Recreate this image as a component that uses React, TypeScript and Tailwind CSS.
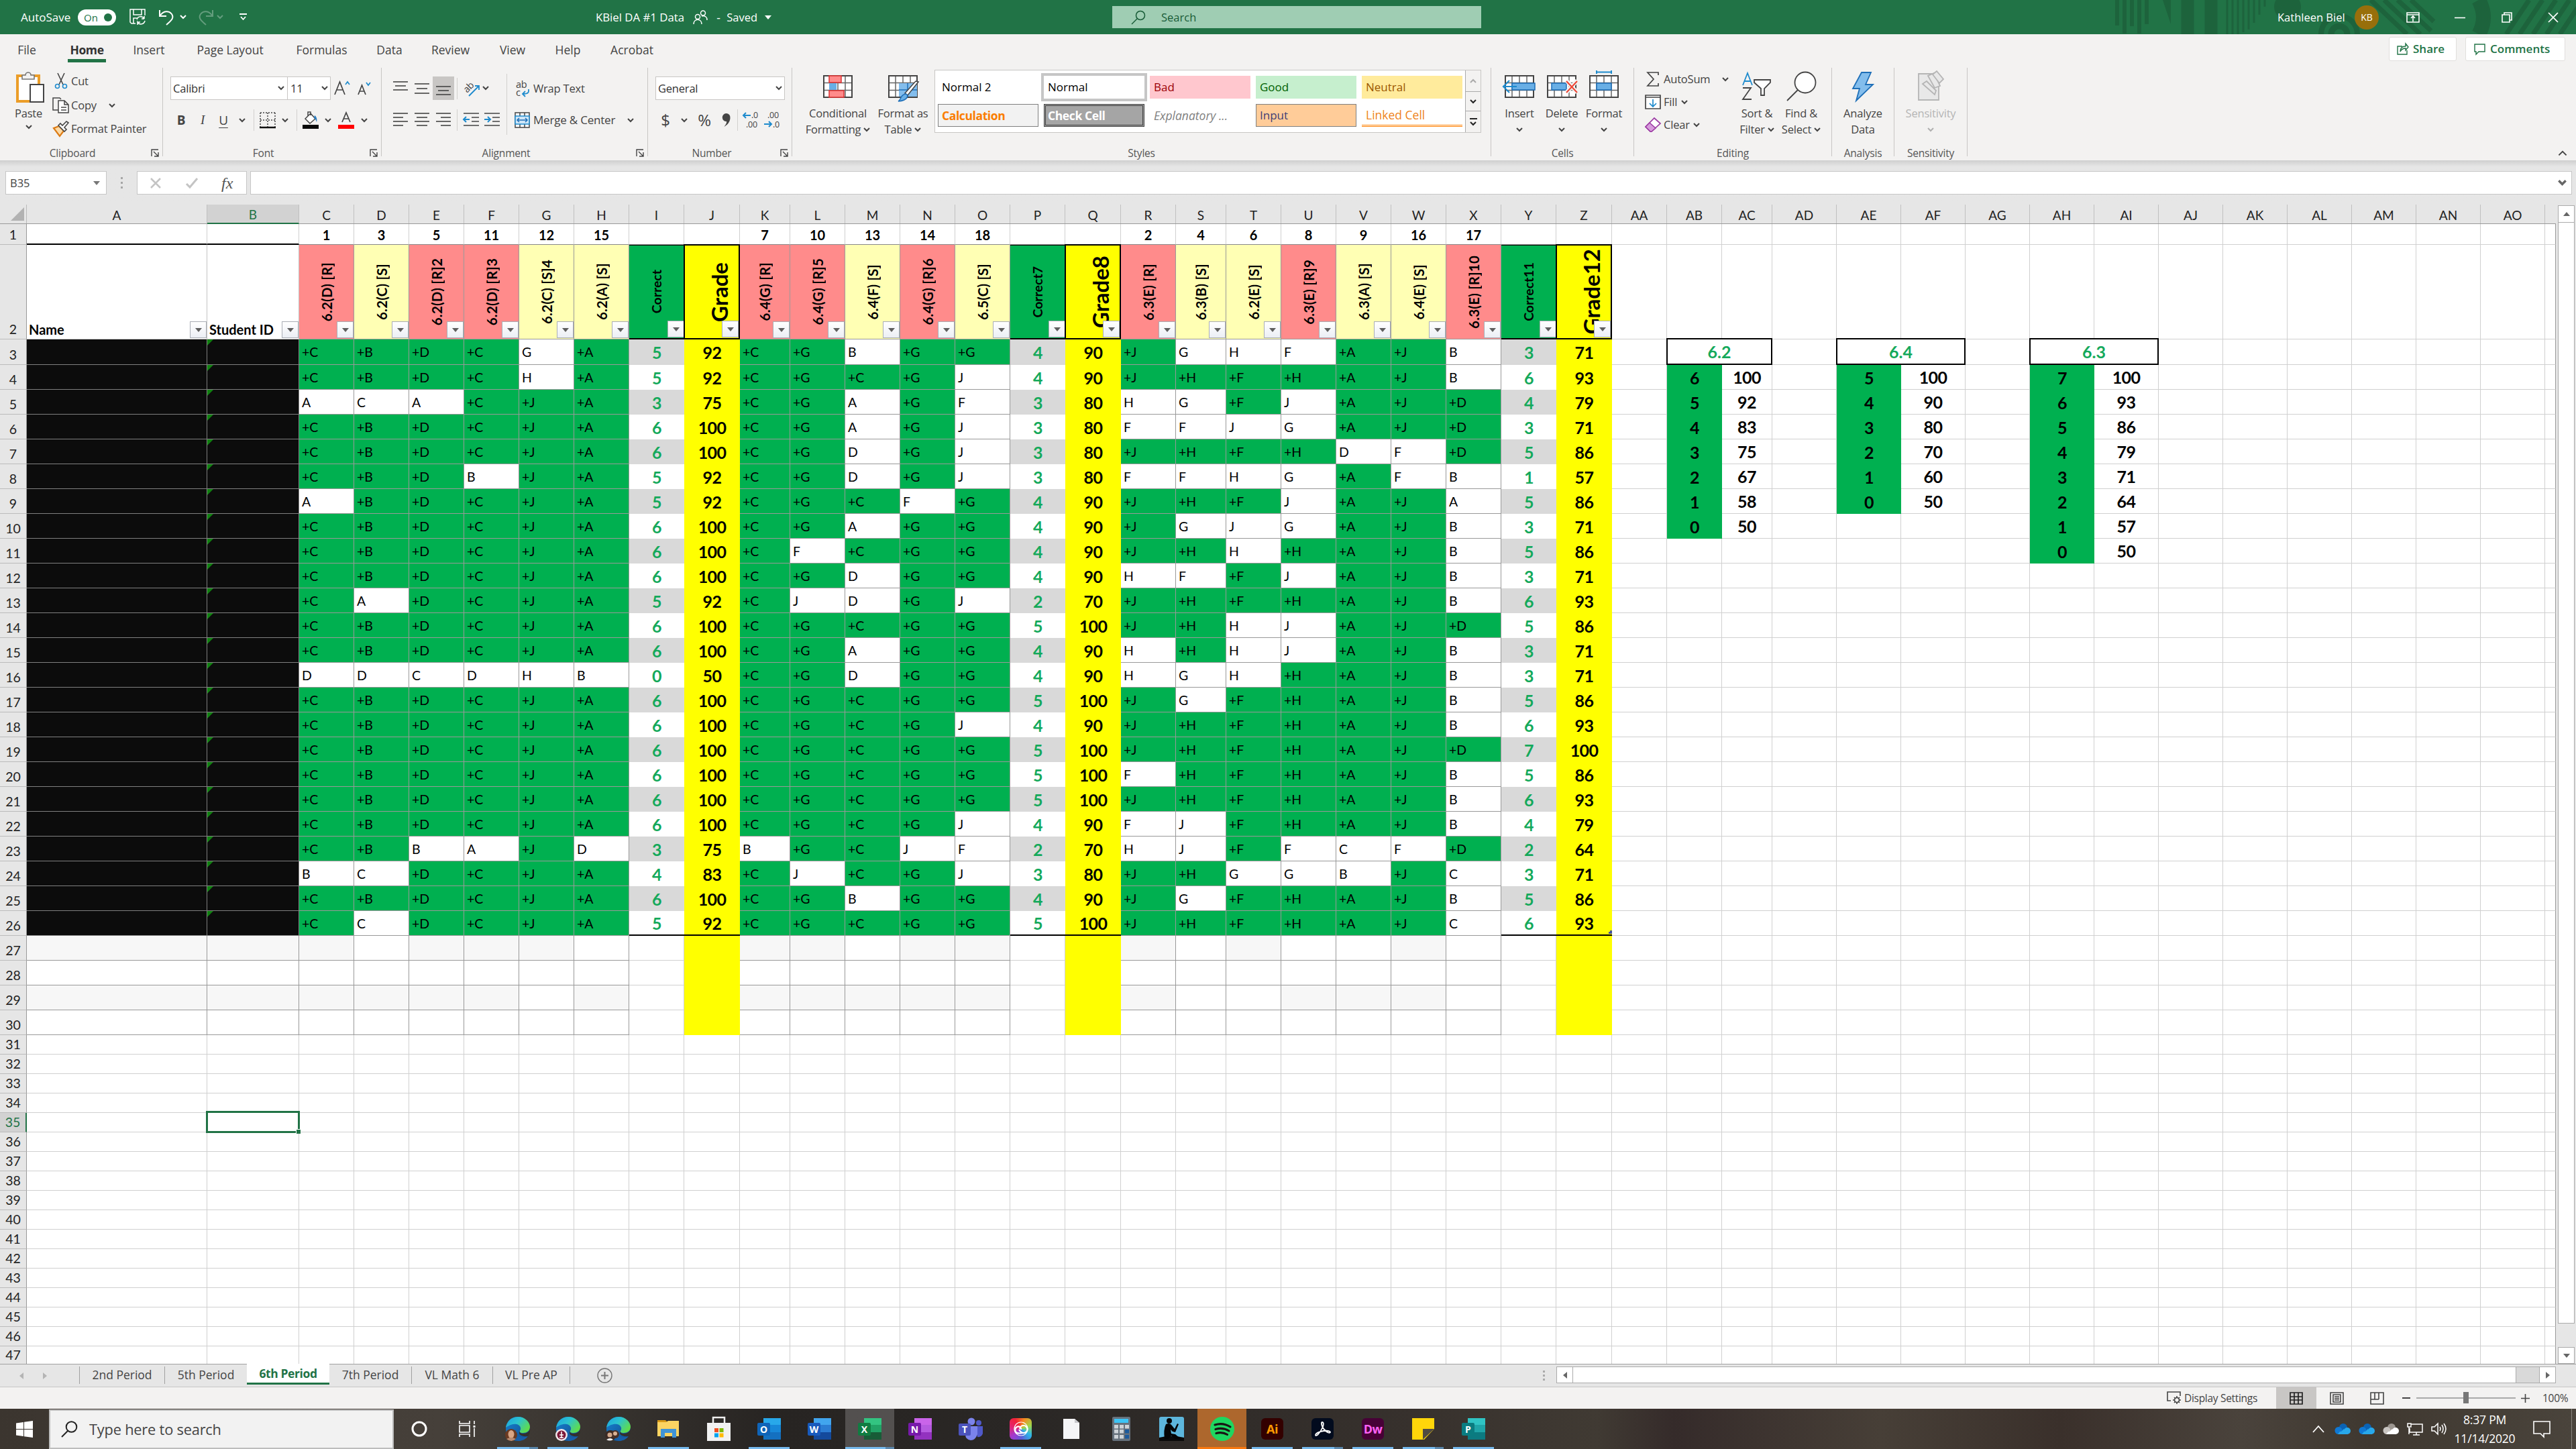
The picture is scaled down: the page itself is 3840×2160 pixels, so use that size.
import React from "react";

type Kids = { children?: React.ReactNode };

/* ---------- small shared glyphs ---------- */

function Chev({ c = "#444", w = 10, sw = 2 }: { c?: string; w?: number; sw?: number }) {
  return (
    <svg width={w} height={w * 0.7} viewBox="0 0 10 7" fill="none" stroke={c} strokeWidth={sw} className="shrink-0">
      <path d="M1 1l4 4 4-4" />
    </svg>
  );
}

function Tri({ c = "#666", dir = "down" }: { c?: string; dir?: "down" | "up" | "left" | "right" }) {
  const d = { down: "M0 2h10l-5 6z", up: "M0 8h10l-5-6z", left: "M8 0v10l-6-5z", right: "M2 0v10l6-5z" }[dir];
  return (
    <svg width="10" height="10" viewBox="0 0 10 10" fill={c} className="shrink-0">
      <path d={d} />
    </svg>
  );
}

function Lines({ rows }: { rows: [number, number, number][] }) {
  return (
    <svg width="22" height="24" viewBox="0 0 22 24" stroke="#444" strokeWidth="1.6">
      {rows.map(([x1, x2, y], i) => (
        <path key={i} d={`M${x1} ${y}H${x2}`} />
      ))}
    </svg>
  );
}

function Launcher() {
  return (
    <svg width="12" height="12" viewBox="0 0 12 12" fill="none" stroke="#444" strokeWidth="1.4">
      <path d="M1 11V1h10M4 4l7 7M11 5v6H5" />
    </svg>
  );
}

/* ---------- title bar ---------- */

function TitleBar() {
  return (
    <div className="relative flex h-[51px] items-center bg-[#217346] text-[17.5px] text-white">
      <svg className="absolute top-0 right-0" width="690" height="51" viewBox="0 0 690 51" stroke="#1d633c" fill="none" style={{ overflow: "hidden" }}>
        <g strokeWidth="6">
          <path d="M6 0V38M17 0V50M28 0V39M39 0V50M50 0V36" />
        </g>
        <path d="M74 0h12V36z" fill="#1d633c" stroke="none" />
        <path d="M111 0V51M146 0V51" strokeWidth="19" />
        <path d="M170 0V51M178 0V51M186 0V51M194 0V48M202 0V44M210 0V34M218 0V22M226 0V10" strokeWidth="3" />
        <circle cx="260" cy="10" r="20" fill="#1d633c" stroke="none" />
        <circle cx="337" cy="51" r="12" strokeWidth="9" />
        <circle cx="337" cy="51" r="27" strokeWidth="8" />
        <path d="M384 0l54 51M404 0l54 51M424 0l50 46M444 0l34 32" strokeWidth="7" />
        <path d="M545 0q14 26 0 51" strokeWidth="22" />
        <path d="M620 0l-34 51M640 0l-34 51M660 0l-34 51M680 0l-34 51M700 0l-34 51" strokeWidth="7" />
      </svg>
      <div className="ml-[31px] w-[85px] whitespace-nowrap text-[17px]">AutoSave</div>
      <div className="flex h-6 w-[57px] items-center justify-between rounded-full bg-white pr-[6px] pl-[9px] text-[15px] text-[#217346]">
        On
        <span className="size-3 rounded-full bg-[#217346]" />
      </div>
      <svg className="ml-[20px]" width="25" height="25" viewBox="0 0 25 25" fill="none" stroke="#fff" strokeWidth="1.5">
        <path d="M9 22H3L1 20V1h22v9M6 1v8h12V1M6 22v-8h5" />
        <path d="M11 16a6 6 0 0 1 11-1v-4m0 4h-4M23 18a6 6 0 0 1-11 2v4m0-4h4" />
      </svg>
      <svg className="ml-[18px]" width="24" height="24" viewBox="0 0 24 24" fill="none" stroke="#fff" strokeWidth="2">
        <path d="M2 1v9h10M2 10C8 1 16 2 20 7c4 6-1 10-8 16" />
      </svg>
      <div className="ml-[8px]"><Chev c="#fff" /></div>
      <svg className="ml-[17px] opacity-30" width="24" height="24" viewBox="0 0 24 24" fill="none" stroke="#fff" strokeWidth="2">
        <path d="M22 1v9H12M22 10C16 1 8 2 4 7c-4 6 1 10 8 16" />
      </svg>
      <div className="ml-[4px] opacity-30"><Chev c="#fff" /></div>
      <svg className="ml-[24px]" width="11" height="11" viewBox="0 0 11 11" fill="none" stroke="#fff" strokeWidth="1.8">
        <path d="M0 1h11M2 5l3.500 4L9 5" />
      </svg>
      <div className="ml-[520px] flex w-[262px] items-center whitespace-nowrap">
        <span className="w-[146px] text-[16.800px]">KBiel DA #1 Data</span>
        <svg width="22" height="22" viewBox="0 0 22 22" fill="none" stroke="#fff" strokeWidth="1.5">
          <circle cx="7" cy="10" r="3.500" /><path d="M1 21c0-9 12-9 12 0" />
          <circle cx="15" cy="4.500" r="3.500" /><path d="M13 9c5-1 8 1 8 6" />
        </svg>
        <span className="ml-[13px] w-[15px]">-</span>
        <span className="w-[57px] text-[16.500px]">Saved</span>
        <Tri c="#fff" />
      </div>
      <div className="ml-[508px] flex h-[33px] w-[550px] items-center bg-[#9fcdb3] text-[#185c37]">
        <svg className="ml-[28px]" width="22" height="22" viewBox="0 0 22 22" fill="none" stroke="#185c37" strokeWidth="1.500">
          <circle cx="14" cy="8" r="6.500" /><path d="M9 13l-8 8" />
        </svg>
        <span className="ml-[23px] text-[16.500px]">Search</span>
      </div>
      <div className="relative ml-auto flex w-[445px] items-center">
        <span className="w-[115px] whitespace-nowrap text-[16.500px]">Kathleen Biel</span>
        <span className="flex size-9 items-center justify-center rounded-full bg-[#986f0b] text-[14px]">KB</span>
        <svg className="ml-[41px]" width="20" height="16" viewBox="0 0 20 16" fill="none" stroke="#fff" strokeWidth="1.600">
          <path d="M1 1h18v14H1zM1 4h18M10 14V7M7 9l3-3 3 3" />
        </svg>
        <svg className="ml-[52px]" width="16" height="16" viewBox="0 0 16 16" stroke="#fff" strokeWidth="1.600"><path d="M0 8.500h16" /></svg>
        <svg className="ml-[54px]" width="16" height="16" viewBox="0 0 16 16" fill="none" stroke="#fff" strokeWidth="1.600">
          <path d="M1 4h11v11H1zM4 4V1h11v11h-3" />
        </svg>
        <svg className="ml-[53px]" width="16" height="16" viewBox="0 0 16 16" stroke="#fff" strokeWidth="1.600"><path d="M1 1l14 14M15 1L1 15" /></svg>
      </div>
    </div>
  );
}

/* ---------- ribbon tabs ---------- */

const TABS: [string, string][] = [
  ["File", "ml-[25px] w-[30px]"],
  ["Home", "ml-[46px] w-[57px]"],
  ["Insert", "ml-[40px] w-[48px]"],
  ["Page Layout", "ml-[44px] w-[106px]"],
  ["Formulas", "ml-[43px] w-[81px]"],
  ["Data", "ml-[40px] w-[41px]"],
  ["Review", "ml-[40px] w-[61px]"],
  ["View", "ml-[41px] w-[42px]"],
  ["Help", "ml-[41px] w-[41px]"],
  ["Acrobat", "ml-[40px] w-[70px]"],
];

function RibbonTabs() {
  return (
    <div className="flex h-[50px] bg-[#f3f2f1] text-[17.500px] text-[#444]">
      {TABS.map(([t, c]) => (
        <div key={t} className={`${c} flex flex-col items-center whitespace-nowrap`}>
          <span className={`flex h-[37px] items-center pt-[8px] ${t === "Home" ? "font-bold tracking-[-0.4px] text-[#333]" : ""}`}>{t}</span>
          {t === "Home" && <span className="h-[5px] w-[57px] bg-[#217346]" />}
        </div>
      ))}
      <div className="mt-[4px] ml-auto flex h-[36px] w-[279px] gap-[13px] text-[17px] font-semibold text-[#217346]">
        <div className="flex w-[101px] items-center rounded-[3px] border border-[#e1dfdd] bg-white pl-[11px]">
          <svg width="18" height="18" viewBox="0 0 18 18" fill="none" stroke="#217346" strokeWidth="1.400">
            <path d="M8 5H1v12h14v-6M5 13c0-6 4-8 8-8V1l4 5-4 5V8c-4 0-6 1-8 5z" />
          </svg>
          <span className="ml-[6px]">Share</span>
        </div>
        <div className="flex w-[149px] items-center rounded-[3px] border border-[#e1dfdd] bg-white pl-[12px]">
          <svg width="17" height="17" viewBox="0 0 17 17" fill="none" stroke="#217346" strokeWidth="1.400">
            <path d="M1 1h15v11H7l-4 4v-4H1z" />
          </svg>
          <span className="ml-[7px]">Comments</span>
        </div>
      </div>
    </div>
  );
}

/* ---------- ribbon groups ---------- */

function Group({ w, label, launcher, lx = "", children }: Kids & { w: string; label: string; launcher?: boolean; lx?: string }) {
  return (
    <>
      <div className={`${w} flex h-[138px] shrink-0 flex-col`}>
        <div className="flex h-[116px]">{children}</div>
        <div className="relative flex h-[22px] items-center justify-center text-[15.500px] tracking-[-0.2px] text-[#555]">
          <span className={lx}>{label}</span>
          {launcher && <span className="absolute right-[5px]"><Launcher /></span>}
        </div>
      </div>
      <div className="h-[132px] w-px shrink-0 bg-[#c8c6c4]" />
    </>
  );
}

const S = ({ w, children }: Kids & { w: string }) => <div className={`${w} flex shrink-0 items-center justify-center`}>{children}</div>;

function Big({ icon, l1, l2, chev, w, c = "text-[#444]" }: { icon: React.ReactNode; l1: string; l2?: string; chev?: boolean; w: string; c?: string }) {
  return (
    <div className={`${w} ${c} flex shrink-0 flex-col items-center text-[16.500px] leading-[24px] tracking-[-0.2px] whitespace-nowrap`}>
      <div className="flex h-[56px] items-center justify-center">{icon}</div>
      <div>{l1}</div>
      <div className="flex h-[24px] items-center gap-[4px]">
        {l2}
        {chev && <Chev c={c === "text-[#444]" ? "#444" : "#b0b0b0"} />}
      </div>
    </div>
  );
}

const AL = {
  top: [[0, 22, 2], [3, 19, 8], [0, 22, 14]],
  mid: [[0, 22, 5], [3, 19, 12], [0, 22, 19]],
  bot: [[0, 22, 9], [3, 19, 15], [0, 22, 21]],
  l: [[0, 22, 2], [0, 15, 8], [0, 22, 14], [0, 15, 20]],
  c: [[0, 22, 2], [3, 19, 8], [0, 22, 14], [3, 19, 20]],
  r: [[0, 22, 2], [7, 22, 8], [0, 22, 14], [7, 22, 20]],
} as Record<string, [number, number, number][]>;

function TableIcon({ children }: Kids) {
  return (
    <svg width="48" height="48" viewBox="0 0 48 48" fill="none">
      <path d="M3 8h42v32H3z" fill="#fff" />
      <path d="M3 18.500h42M3 29.500h42M13 8v32M24 8v32M35 8v32" stroke="#666" strokeWidth="1.500" />
      <path d="M3 8h42v32H3z" stroke="#444" strokeWidth="2" />
      {children}
    </svg>
  );
}

function IndentIcon({ right }: { right?: boolean }) {
  return (
    <svg width="23" height="24" viewBox="0 0 23 24" fill="none" strokeWidth="1.600">
      <path d="M0 2h23M12 8h11M12 14h11M0 20h23" stroke="#444" />
      <path d={right ? "M0 11h9M5 7l4 4-4 4" : "M9 11H0M4 7l-4 4 4 4"} stroke="#1e8bcd" strokeWidth="2" />
    </svg>
  );
}

function DecimalIcon({ dec }: { dec?: boolean }) {
  return (
    <svg width="27" height="28" viewBox="0 0 27 28" fill="none">
      <g fontFamily="Open Sans" fontSize="12.500" fill="#444">
        <text x={dec ? 5 : 12} y="11">{dec ? ".00" : ".0"}</text>
        <text x={dec ? 13 : 4} y="25">{dec ? ".0" : ".00"}</text>
      </g>
      <path d={dec ? "M0 20h11M7 16l4 4-4 4" : "M11 7H0M4 3L0 7l4 4"} stroke="#1e8bcd" strokeWidth="2" />
    </svg>
  );
}

function Ribbon() {
  return (
    <div className="relative flex h-[138px] bg-[#f3f2f1] text-[16.500px] tracking-[-0.2px] text-[#444]">
      <Group w="w-[242px]" label="Clipboard" launcher lx="pr-[26px]">
        <div className="ml-[7px] flex w-[71px] flex-col items-center">
          <svg className="mt-[6px] ml-[4px]" width="44" height="48" viewBox="0 0 44 48" fill="none">
            <path d="M3 6h32v38H3z" fill="#fff" stroke="#eb9d28" strokeWidth="4" />
            <path d="M10 11V5h5a4 4 0 0 1 8 0h5v6z" fill="#f3f2f1" stroke="#777" strokeWidth="1.600" />
            <path d="M22 19h20v26H22z" fill="#fff" stroke="#444" strokeWidth="2" />
          </svg>
          <span className="mt-[2px]">Paste</span>
          <div className="mt-[5px] leading-none"><Chev /></div>
        </div>
        <div className="flex flex-col whitespace-nowrap">
          <div className="mt-[3px] flex h-[34px] items-center">
            <S w="w-[25px]">
              <svg width="20" height="24" viewBox="0 0 20 24" fill="none" strokeWidth="1.600">
                <path d="M5 0l8 17M15 0L7 17" stroke="#444" />
                <circle cx="4.500" cy="19.500" r="3" stroke="#1e8bcd" /><circle cx="15.500" cy="19.500" r="3" stroke="#1e8bcd" />
              </svg>
            </S>
            <span className="ml-[3px]">Cut</span>
          </div>
          <div className="mt-[2px] flex h-[34px] items-center">
            <S w="w-[25px]">
              <svg width="25" height="24" viewBox="0 0 25 24" fill="none" stroke="#444" strokeWidth="1.500">
                <path d="M9 19H1V1h10l2 2" /><path d="M9 5h9l6 6v12H9zM18 5v6h6M13 15h8M13 19h8" fill="#fff" />
              </svg>
            </S>
            <span className="ml-[3px] w-[56px]">Copy</span>
            <Chev />
          </div>
          <div className="mt-[1px] flex h-[34px] items-center">
            <S w="w-[25px]">
              <svg width="25" height="24" viewBox="0 0 25 24" fill="none" strokeWidth="1.600">
                <path d="M2 11l8-3 7 7-6 8z" fill="#fbd9a5" stroke="#dc7b14" strokeWidth="2.200" />
                <path d="M9 7l9 9 3-3-3-3 6-7-3-2-6 6-3-3z" fill="#fff" stroke="#444" />
              </svg>
            </S>
            <span className="ml-[3px] text-[16.500px]">Format Painter</span>
          </div>
        </div>
      </Group>

      <Group w="w-[325px]" label="Font" launcher lx="pr-[26px]">
        <div className="flex flex-col">
          <div className="mt-[13px] ml-[11px] flex h-[35px] items-center">
            <div className="flex h-[35px] w-[175px] items-center justify-between border border-[#c8c6c4] bg-white pr-[4px] pl-[3px] text-[#333]">Calibri<Chev /></div>
            <div className="-ml-px flex h-[35px] w-[65px] items-center justify-between border border-[#c8c6c4] bg-white pr-[3px] pl-[4px] text-[#333]">11<Chev /></div>
            <svg className="ml-[5px]" width="58" height="24" viewBox="0 0 58 24" fill="none" strokeWidth="1.700">
              <path d="M1 21L8.500 2 16 21M4 14h9M36 21L41.500 7 47 21M38 16h7" stroke="#444" />
              <path d="M17 6l3-4 3 4M48 3l3 4 3-4" stroke="#1e8bcd" />
            </svg>
          </div>
          <div className="mt-[11px] ml-[11px] flex h-[38px] items-center text-[19px]">
            <S w="w-[32px]"><b>B</b></S>
            <S w="w-[32px]"><i className="font-['Liberation_Serif']">I</i></S>
            <S w="w-[30px]"><span className="underline underline-offset-4">U</span></S>
            <S w="w-[26px]"><Chev /></S>
            <div className="mr-[8px] ml-[4px] h-[32px] w-px bg-[#d2d0ce]" />
            <svg width="24" height="24" viewBox="0 0 24 24" fill="none" stroke="#444">
              <path d="M1 1h22M1 12h22M1 1v21M12 1v21M23 1v21" strokeDasharray="2 2" strokeWidth="1.500" />
              <path d="M0 23h24" strokeWidth="2.500" stroke="#111" />
            </svg>
            <S w="w-[28px]"><Chev /></S>
            <div className="mr-[8px] ml-[3px] h-[32px] w-px bg-[#d2d0ce]" />
            <svg width="24" height="26" viewBox="0 0 24 26" fill="none" strokeWidth="1.500">
              <path d="M4 11l8-8 7 8-8 7zM8 7V1h4v5" fill="#fff" stroke="#444" /><path d="M18 6c3 2 4 6 3 10-1-3-2-5-4-6z" fill="#2b7fc3" />
              <path d="M0 20h24v6H0z" fill="#0a0a0a" />
            </svg>
            <S w="w-[28px]"><Chev /></S>
            <svg width="26" height="26" viewBox="0 0 26 26" fill="none" strokeWidth="1.700">
              <path d="M7 16l6-14 6 14M9 11h8" stroke="#444" /><path d="M1 20h24v6H1z" fill="#f00" />
            </svg>
            <S w="w-[27px]"><Chev /></S>
          </div>
        </div>
      </Group>

      <Group w="w-[396px]" label="Alignment" launcher lx="pr-[25px]">
        <div className="flex w-[186px] flex-col">
          <div className="mt-[13px] ml-[12px] flex h-[35px] items-center">
            <S w="w-[32px]"><Lines rows={AL.top} /></S>
            <S w="w-[32px]"><Lines rows={AL.mid} /></S>
            <div className="flex h-[35px] w-[32px] items-center justify-center bg-[#c8c6c4]"><Lines rows={AL.bot} /></div>
            <div className="mr-[9px] ml-[4px] h-[32px] w-px bg-[#d2d0ce]" />
            <svg width="25" height="24" viewBox="0 0 25 24" fill="none">
              <text x="1" y="15" fontSize="14" fill="#444" fontFamily="Open Sans" transform="rotate(-45 8 12)">ab</text>
              <path d="M8 23L23 8M17 8h6v6" stroke="#1e8bcd" strokeWidth="1.800" />
            </svg>
            <div className="ml-[3px]"><Chev /></div>
          </div>
          <div className="mt-[11px] ml-[12px] flex h-[38px] items-center">
            <S w="w-[32px]"><Lines rows={AL.l} /></S>
            <S w="w-[32px]"><Lines rows={AL.c} /></S>
            <S w="w-[32px]"><Lines rows={AL.r} /></S>
            <div className="mr-[5px] ml-[4px] h-[32px] w-px bg-[#d2d0ce]" />
            <S w="w-[31px]"><IndentIcon /></S>
            <S w="w-[31px]"><IndentIcon right /></S>
          </div>
        </div>
        <div className="mt-[9px] h-[91px] w-px bg-[#d2d0ce]" />
        <div className="flex flex-col whitespace-nowrap">
          <div className="mt-[13px] ml-[12px] flex h-[35px] items-center">
            <svg width="23" height="26" viewBox="0 0 23 26" fill="none">
              <g fontFamily="Open Sans" fontSize="14.500" fill="#444"><text x="1" y="12">ab</text><text x="1" y="24">c</text></g>
              <path d="M20 14v3q0 4-8 4M15 17l-4 4 4 4" stroke="#1e8bcd" strokeWidth="1.800" />
            </svg>
            <span className="ml-[4px]">Wrap Text</span>
          </div>
          <div className="mt-[11px] ml-[11px] flex h-[38px] items-center">
            <svg width="23" height="24" viewBox="0 0 23 24" fill="none" strokeWidth="1.500">
              <path d="M1 1h21v22H1z" fill="#fff" stroke="#444" /><path d="M8 1v22M15 1v22" stroke="#444" />
              <path d="M1 6h21v12H1z" fill="#cfe6f7" stroke="#1e8bcd" /><path d="M4 12h15M7 9l-3 3 3 3M16 9l3 3-3 3" stroke="#1e6fb8" />
            </svg>
            <span className="ml-[5px] w-[140px] text-[17px]">Merge &amp; Center</span>
            <Chev />
          </div>
        </div>
      </Group>

      <Group w="w-[214px]" label="Number" launcher lx="pr-[24px]">
        <div className="flex flex-col">
          <div className="mt-[13px] ml-[11px] flex h-[35px] w-[193px] items-center justify-between border border-[#c8c6c4] bg-white pr-[3px] pl-[3px] text-[#333]">General<Chev /></div>
          <div className="mt-[11px] ml-[11px] flex h-[38px] items-center text-[24px]">
            <S w="w-[30px]">$</S>
            <S w="w-[26px]"><Chev /></S>
            <S w="w-[34px]">%</S>
            <svg className="ml-[9px]" width="14" height="20" viewBox="0 0 14 20" fill="#444"><path d="M6.500 0a6 6 0 0 1 6 7c-.5 6-4 10-9 13 3-4 4-6 3.500-8A6 6 0 1 1 6.500 0z" /></svg>
            <div className="mr-[8px] ml-[9px] h-[32px] w-px bg-[#d2d0ce]" />
            <DecimalIcon />
            <div className="w-[4px]" />
            <DecimalIcon dec />
          </div>
        </div>
      </Group>

      <Group w="w-[1041px]" label="Styles">
        <Big w="ml-[17px] w-[102px]" l1="Conditional" l2="Formatting" chev icon={
          <TableIcon><path d="M11 8h18v10H11zM11 30h22v10H11z" fill="#ff8b8b" stroke="#d33" strokeWidth="1.500" /><path d="M11 19h11v10H11z" fill="#69afe5" /></TableIcon>} />
        <Big w="w-[92px]" l1="Format as" l2="Table" chev icon={
          <TableIcon><path d="M18 19h27v20H18z" fill="#83bdec" /><path d="M18 29h27M31 19v20" stroke="#1e6fb8" strokeWidth="1.500" /><path d="M47 17L31 37l-4-3L43 16z" fill="#fff" stroke="#444" strokeWidth="1.500" /><path d="M28 35c5 1 4 10-11 11 5-3 3-10 11-11z" fill="#69afe5" stroke="#1e6fb8" strokeWidth="1.500" /></TableIcon>} />
        <div className="mt-[3px] ml-[1px] flex h-[94px] w-[815px] border border-[#c8c6c4] bg-white text-[17px] tracking-normal">
          <div className="grid w-[790px] grid-cols-[158px_158px_158px_158px_158px] grid-rows-[42px_42px] pt-[4px]">
            <div className="m-[4px] flex items-center pl-[6px] text-black">Normal 2</div>
            <div className="flex items-center border-[4px] border-[#c6c6c6] pl-[6px] text-black">Normal</div>
            <div className="m-[4px] flex items-center bg-[#ffc7ce] pl-[6px] text-[#9c0006]">Bad</div>
            <div className="m-[4px] flex items-center bg-[#c6efce] pl-[6px] text-[#006100]">Good</div>
            <div className="m-[4px] flex items-center bg-[#ffeb9c] pl-[6px] text-[#9c5700]">Neutral</div>
            <div className="m-[4px] flex items-center border border-[#7f7f7f] bg-[#f2f2f2] pl-[5px] text-[17.500px] font-bold tracking-[-0.4px] text-[#fa7d00]">Calculation</div>
            <div className="m-[4px] flex items-center border-[3px] border-double border-[#3f3f3f] bg-[#a5a5a5] pl-[3px] text-[17.500px] font-bold tracking-[-0.4px] text-white">Check Cell</div>
            <div className="m-[4px] flex items-center pl-[6px] text-[17.500px] text-[#7f7f7f] italic">Explanatory ...</div>
            <div className="m-[4px] flex items-center border border-[#7f7f7f] bg-[#ffcc99] pl-[5px] text-[#3f3f76]">Input</div>
            <div className="m-[4px] flex items-center border-b-[3px] border-double border-[#ff8001] pl-[6px] text-[17.500px] text-[#ee8420]">Linked Cell</div>
          </div>
          <div className="flex w-[23px] flex-col divide-y divide-[#aaa] border-l border-[#aaa] bg-[#f3f2f1]">
            <div className="flex h-[32px] items-center justify-center"><span className="rotate-180"><Chev c="#aaa" /></span></div>
            <div className="flex h-[29px] items-center justify-center"><Chev c="#222" /></div>
            <div className="flex flex-1 flex-col items-center justify-center gap-[3px]"><span className="h-[2px] w-[11px] bg-[#222]" /><Chev c="#222" /></div>
          </div>
        </div>
      </Group>

      <Group w="w-[212px]" label="Cells">
        <Big w="ml-[11px] w-[62px]" l1="Insert" chev icon={
          <TableIcon><path d="M13 19h34v10H13z" fill="#69afe5" stroke="#1e6fb8" strokeWidth="1.500" /><path d="M20 24H1M9 15l-9 9 9 9" stroke="#1e8bcd" strokeWidth="2.200" /></TableIcon>} />
        <Big w="w-[64px]" l1="Delete" chev icon={
          <TableIcon><path d="M9 19h22v10H9z" fill="#69afe5" stroke="#1e6fb8" strokeWidth="1.500" /><path d="M31 15l16 18M47 15L31 33" stroke="#f3f2f1" strokeWidth="6" /><path d="M31 16l16 17M47 16L31 33" stroke="#e43" strokeWidth="2" /></TableIcon>} />
        <Big w="w-[62px]" l1="Format" chev icon={
          <TableIcon><path d="M13 19h22v10H13z" fill="#69afe5" stroke="#1e6fb8" strokeWidth="1.500" /><path d="M13 2.500h22M13 0v5M35 0v5" stroke="#1e8bcd" strokeWidth="2" /></TableIcon>} />
      </Group>

      <Group w="w-[294px]" label="Editing">
        <div className="ml-[14px] flex w-[130px] flex-col whitespace-nowrap">
          <div className="flex h-[34px] items-center">
            <S w="w-[28px]"><svg width="20" height="22" viewBox="0 0 20 22" fill="none" stroke="#444" strokeWidth="1.700"><path d="M18 5V1H2l9 10L2 21h16v-4" /></svg></S>
            <span className="ml-[2px] w-[87px]">AutoSum</span><Chev />
          </div>
          <div className="flex h-[34px] items-center">
            <S w="w-[28px]"><svg width="24" height="22" viewBox="0 0 24 22" fill="none"><path d="M1 1h22v20H1z" fill="#fff" stroke="#444" strokeWidth="1.700" /><path d="M1 4h22" stroke="#444" strokeWidth="1.500" /><path d="M12 7v11M7 13l5 5 5-5" stroke="#1e8bcd" strokeWidth="1.700" /></svg></S>
            <span className="mr-[6px] ml-[2px]">Fill</span><Chev />
          </div>
          <div className="flex h-[34px] items-center">
            <S w="w-[28px]"><svg width="24" height="22" viewBox="0 0 24 22"><path d="M1 14L14 1l9 8L10 21H8z" fill="#fff" stroke="#9b3aa3" strokeWidth="1.700" /><path d="M1 14l6-6 9 8-6 5H8z" fill="#d79bdc" stroke="#9b3aa3" strokeWidth="1.500" /></svg></S>
            <span className="mr-[5px] ml-[2px]">Clear</span><Chev />
          </div>
        </div>
        <Big w="ml-[6px] w-[66px]" l1="Sort &amp;" l2="Filter" chev icon={
          <svg width="44" height="42" viewBox="0 0 44 42" fill="none" strokeWidth="1.800">
            <path d="M1 19L8 1l7 18M4 13h8" stroke="#1e8bcd" /><path d="M1 23h12L1 40h13" stroke="#444" />
            <path d="M18 11h24v4l-9 9v10h-5V24l-10-9z" fill="#fff" stroke="#444" />
          </svg>} />
        <Big w="w-[66px]" l1="Find &amp;" l2="Select" chev icon={
          <svg width="46" height="46" viewBox="0 0 46 46" fill="none" stroke="#444" strokeWidth="1.800">
            <circle cx="29" cy="17" r="15.500" fill="#fff" /><path d="M18 28L2 44" />
          </svg>} />
      </Group>

      <Group w="w-[92px]" label="Analysis">
        <Big w="w-[92px]" l1="Analyze" l2="Data" icon={
          <svg width="34" height="44" viewBox="0 0 34 44"><path d="M15 1h14l-8 18h11L7 43l5-18H2z" fill="#83bdec" stroke="#1e6fb8" strokeWidth="1.800" /></svg>} />
      </Group>
      <Group w="w-[108px]" label="Sensitivity">
        <Big w="w-[108px]" c="text-[#b5b5b5]" l1="Sensitivity" chev icon={
          <svg width="42" height="48" viewBox="0 0 42 48" fill="#e8e8e8" stroke="#b5b5b5" strokeWidth="1.800">
            <path d="M3 5h30v39H3z" /><path d="M9 20l6-4 14 14-2 6zM17 8l10 18 8-3-9-19z" /><path d="M24 6l6-5 10 12-6 6z" /></svg>} />
      </Group>
      <div className="mr-[13px] mb-[6px] ml-auto flex items-end"><span className="rotate-180"><Chev w={14} sw={1.400} /></span></div>
    </div>
  );
}

/* ---------- formula bar ---------- */

function FormulaBar() {
  return (
    <div className="flex h-[66px] bg-gradient-to-b from-[#cfcfcf] via-[#e6e6e6] via-[14%] to-[#e6e6e6] pt-[16px]">
      <div className="ml-[8px] flex h-[35px] w-[151px] items-center justify-between border border-[#c6c6c6] bg-white pr-[9px] pl-[6px] text-[16.500px] text-[#444]">
        B35<Tri c="#777" />
      </div>
      <div className="flex h-[35px] w-[45px] flex-col items-center justify-center gap-[4px]">
        <i className="size-[3px] bg-[#a6a6a6]" /><i className="size-[3px] bg-[#a6a6a6]" /><i className="size-[3px] bg-[#a6a6a6]" />
      </div>
      <div className="flex h-[35px] w-[164px] items-center border border-[#c6c6c6] bg-white">
        <svg className="ml-[18px]" width="18" height="16" viewBox="0 0 18 16" stroke="#c4c4c4" strokeWidth="2.500"><path d="M2 1l14 14M16 1L2 15" /></svg>
        <svg className="ml-[36px]" width="19" height="16" viewBox="0 0 19 16" fill="none" stroke="#c4c4c4" strokeWidth="3"><path d="M1 9l5 5L17 1" /></svg>
        <span className="ml-[34px] font-['Liberation_Serif'] text-[24px] leading-none text-[#555] italic">fx</span>
      </div>
      <div className="ml-[5px] flex h-[35px] w-[3461px] items-center justify-end border border-[#c6c6c6] bg-white pr-[7px]"><Chev c="#666" w={13} sw={2.600} /></div>
    </div>
  );
}

/* ---------- worksheet ---------- */

const COLS = "A B C D E F G H I J K L M N O P Q R S T U V W X Y Z AA AB AC AD AE AF AG AH AI AJ AK AL AM AN AO".split(" ");
const GRID =
  "grid grid-cols-[40px_269px_137px_82px_82px_82px_82px_82px_82px_82px_83px_75px_82px_82px_82px_82px_82px_83px_82px_75px_82px_82px_82px_82px_82px_82px_83px_82px_82px_75px_96px_96px_96px_96px_96px_96px_96px_96px_96px_96px_96px_96px_16px]";

const HEADS: Record<string, [string, string]> = {
  C: ["1", "6.2(D) [R]"], D: ["3", "6.2(C) [S]"], E: ["5", "6.2(D) [R]2"], F: ["11", "6.2(D) [R]3"], G: ["12", "6.2(C) [S]4"], H: ["15", "6.2(A) [S]"],
  I: ["", "Correct"], J: ["", "Grade"],
  K: ["7", "6.4(G) [R]"], L: ["10", "6.4(G) [R]5"], M: ["13", "6.4(F) [S]"], N: ["14", "6.4(G) [R]6"], O: ["18", "6.5(C) [S]"],
  P: ["", "Correct7"], Q: ["", "Grade8"],
  R: ["2", "6.3(E) [R]"], S: ["4", "6.3(B) [S]"], T: ["6", "6.2(E) [S]"], U: ["8", "6.3(E) [R]9"], V: ["9", "6.3(A) [S]"], W: ["16", "6.4(E) [S]"], X: ["17", "6.3(E) [R]10"],
  Y: ["", "Correct11"], Z: ["", "Grade12"],
};

const KEY: Record<string, string> = {
  C: "C", D: "B", E: "D", F: "C", G: "J", H: "A", K: "C", L: "G", M: "C", N: "G", O: "G", R: "J", S: "H", T: "F", U: "H", V: "A", W: "J", X: "D",
};

/* One entry per student: answers for each block ("." = correct), then count and grade. */
const DATA = `
....G. 5 92 ..B.. 4 90 .GHF..B 3 71
....H. 5 92 ....J 4 90 ......B 6 93
ACA... 3 75 ..A.F 3 80 HG.J... 4 79
...... 6 100 ..A.J 3 80 FFJG... 3 71
...... 6 100 ..D.J 3 80 ....DF. 5 86
...B.. 5 92 ..D.J 3 80 FFHG.FB 1 57
A..... 5 92 ...F. 4 90 ...J..A 5 86
...... 6 100 ..A.. 4 90 .GJG..B 3 71
...... 6 100 .F... 4 90 ..H...B 5 86
...... 6 100 ..D.. 4 90 HF.J..B 3 71
.A.... 5 92 .JD.J 2 70 ......B 6 93
...... 6 100 ..... 5 100 ..HJ... 5 86
...... 6 100 ..A.. 4 90 H.HJ..B 3 71
DDCDHB 0 50 ..D.. 4 90 HGH...B 3 71
...... 6 100 ..... 5 100 .G....B 5 86
...... 6 100 ....J 4 90 ......B 6 93
...... 6 100 ..... 5 100 ....... 7 100
...... 6 100 ..... 5 100 F.....B 5 86
...... 6 100 ..... 5 100 ......B 6 93
...... 6 100 ....J 4 90 FJ....B 4 79
..BA.D 3 75 B..JF 2 70 HJ.FCF. 2 64
BC.... 4 83 .J..J 3 80 ..GGB.C 3 71
...... 6 100 ..B.. 4 90 .G....B 5 86
.C.... 5 92 ..... 5 100 ......C 6 93`
  .trim()
  .split("\n")
  .map((l) => {
    const [a, i, j, b, p, q, c, y, z] = l.split(" ");
    const o: Record<string, string> = { I: i, J: j, P: p, Q: q, Y: y, Z: z };
    [..."CDEFGH"].forEach((k, n) => (o[k] = a[n]));
    [..."KLMNO"].forEach((k, n) => (o[k] = b[n]));
    [..."RSTUVWX"].forEach((k, n) => (o[k] = c[n]));
    return o;
  });

const LOOKUPS: Record<string, { title: string; first: number; grades: string[] }> = {
  AB: { title: "6.2", first: 6, grades: "100 92 83 75 67 58 50".split(" ") },
  AE: { title: "6.4", first: 5, grades: "100 90 80 70 60 50".split(" ") },
  AH: { title: "6.3", first: 7, grades: "100 93 86 79 71 64 57 50".split(" ") },
};
const RIGHTS: Record<string, string> = { AC: "AB", AF: "AE", AI: "AH" };

const SHADED: Record<number, string> = { 27: "ABCEFGKLNORTW", 29: "ABCDEFHKLMNORUVW" };

const PLAIN = "border-r border-b border-[#d0d0d0] bg-white";
const BIG = "flex items-center justify-center text-[25px] font-bold tracking-[-0.6px]";

function FilterBtn() {
  return (
    <span className="absolute right-0 bottom-[1px] flex h-[25px] w-[25px] items-center justify-center border border-[#a9adb5] bg-gradient-to-b from-white to-[#eceff5]">
      <Tri c="#5f5f5f" />
    </span>
  );
}

function headFill(c: string) {
  if ("IPY".includes(c)) return "bg-[#00b050] border-t border-b-2 border-black";
  if ("JQZ".includes(c)) return "bg-[#ffff00] border-2 border-black -ml-px -mt-px";
  return HEADS[c][1].includes("[R]")
    ? "bg-[#ff8b8b] border-r border-b border-[#999]"
    : "bg-[#ffffb4] border-r border-b border-[#999]";
}

function Cell({ r, c }: { r: number; c: string }) {
  if (r === 1) {
    const b = c === "A" || c === "B" ? "border-b-2 border-b-black" : HEADS[c] ? "border-b border-b-[#888]" : "border-b border-b-[#d0d0d0]";
    return <div className={`flex items-center justify-center border-r border-r-[#d0d0d0] bg-white pt-[2px] text-[20px] font-bold ${b}`}>{HEADS[c]?.[0]}</div>;
  }
  if (r === 2) {
    if (c === "A" || c === "B")
      return (
        <div className="relative flex items-end border-r border-b border-[#c4c4c4] bg-white pb-[2px] pl-[3px] text-[20px] font-bold whitespace-nowrap">
          {c === "A" ? "Name" : "Student ID"}
          <FilterBtn />
        </div>
      );
    if (!HEADS[c]) return <div className={PLAIN} />;
    const grade = "JQZ".includes(c);
    return (
      <div className={`relative flex items-center justify-center ${headFill(c)}`}>
        <span className={`rotate-180 font-bold whitespace-nowrap [writing-mode:vertical-rl] ${grade ? "ml-[22px] text-[33px] leading-[36px]" : c.match(/[IPY]/) ? "text-[19.500px]" : "text-[20.500px] tracking-[0.2px]"}`}>{HEADS[c][1]}</span>
        <FilterBtn />
      </div>
    );
  }
  if (r <= 26) {
    const d = DATA[r - 3];
    const last = r === 26;
    if (c === "A") return <div className="border-r border-b border-[#808080] bg-[#0c0c0c]" />;
    if (c === "B")
      return (
        <div className="border-r border-b border-[#808080] bg-[#0c0c0c]">
          <svg width="9" height="9"><path d="M0 0h9L0 9z" fill="#108010" /></svg>
        </div>
      );
    if ("IPY".includes(c))
      return <div className={`${BIG} text-[#14a95b] ${r % 2 ? "bg-[#d9d9d9]" : "bg-white"} ${last ? "border-b-2 border-black" : ""}`}>{d[c]}</div>;
    if ("JQZ".includes(c))
      return (
        <div className={`${BIG} relative bg-[#ffff00] ${last ? "border-b-2 border-black" : ""}`}>
          {d[c]}
          {last && c === "Z" && <span className="absolute right-0 bottom-[1px] size-[5px] border-r-[3px] border-b-[3px] border-[#44549c]" />}
        </div>
      );
    if (KEY[c]) {
      const ok = d[c] === ".";
      return (
        <div className={`flex items-center border-r border-b border-[#999] pt-[1px] pl-[4px] text-[19.500px] ${ok ? "bg-[#00b050]" : "bg-white"}`}>
          {ok ? `+${KEY[c]}` : d[c]}
        </div>
      );
    }
  } else if (r <= 30) {
    if ("JQZ".includes(c)) return <div className="bg-[#ffff00]" />;
    if (c === "A" || c === "B" || KEY[c])
      return <div className={`border-r border-b border-[#999] ${SHADED[r]?.includes(c) ? "bg-[#f7f7f7]" : "bg-white"}`} />;
  }
  const n = r - 4;
  const L = LOOKUPS[c];
  if (L) {
    if (r === 3) return <div className="z-10 col-span-2 -mt-[2px] -ml-px flex items-center justify-center border-2 border-black bg-white text-[25px] font-bold text-[#14a95b]">{L.title}</div>;
    if (n >= 0 && n < L.grades.length) return <div className={`${BIG} bg-[#00b050]`}>{L.first - n}</div>;
  }
  const R = RIGHTS[c];
  if (R) {
    if (r === 3) return null;
    if (n >= 0 && n < LOOKUPS[R].grades.length) return <div className={`${PLAIN} ${BIG}`}>{LOOKUPS[R].grades[n]}</div>;
  }
  if (r === 35 && c === "B")
    return (
      <div className={`${PLAIN} relative`}>
        <span className="absolute -top-[3px] -right-[2px] -bottom-[2px] -left-[2px] z-10 border-[3px] border-[#217346]" />
        <span className="absolute -right-[3px] -bottom-[3px] z-20 size-[7px] border-t border-l border-white bg-[#217346]" />
      </div>
    );
  return <div className={PLAIN} />;
}

function rowHeight(r: number) {
  if (r === 1) return "h-[31px]";
  if (r === 2) return "h-[141px]";
  if (r === 3) return "h-[38px]";
  if (r <= 30) return "h-[37px]";
  return r === 47 ? "h-[26px]" : "h-[29px]";
}

function Sheet() {
  return (
    <div className="flex h-[1728px] bg-[#e6e6e6]">
      <div className="w-[3810px] font-['Lato',sans-serif] text-black">
        <div className={`${GRID} h-[29px] border-b border-[#999] bg-[#e6e6e6] text-[19px]`}>
          <div className="flex items-end justify-end border-r border-[#bbb] pr-[3px] pb-[4px]">
            <svg width="20" height="20"><path d="M20 0v20H0z" fill="#b2b2b2" /></svg>
          </div>
          {COLS.map((c) => (
            <div key={c} className={`flex items-center justify-center border-r border-[#c0c0c0] pt-[3px] ${c === "B" ? "-mb-px border-b-2 border-b-[#217346] bg-[#d2d2d2] text-[#217346]" : "text-[#222]"}`}>{c}</div>
          ))}
          <div />
        </div>
        {Array.from({ length: 47 }, (_, i) => i + 1).map((r) => (
          <div key={r} className={`${GRID} ${rowHeight(r)}`}>
            <div className={`flex items-end justify-center border-b border-[#bbb] pb-[1px] text-[19.500px] leading-[26px] ${r === 35 ? "border-r-2 border-r-[#217346] bg-[#d2d2d2] text-[#217346]" : "border-r border-r-[#999] bg-[#e6e6e6] text-[#222]"}`}>{r}</div>
            {COLS.map((c) => (
              <Cell key={c} r={r} c={c} />
            ))}
            <div className="border-r border-b border-[#d0d0d0] border-r-[#999] bg-white" />
          </div>
        ))}
      </div>
      <div className="ml-[3px] flex w-[25px] flex-col">
        <div className="mt-[1px] flex h-[26px] items-center justify-center border border-[#ababab] bg-white"><Tri dir="up" /></div>
        <div className="-mt-px h-[1643px] border border-[#ababab] bg-white" />
        <div className="mt-[35px] flex h-[25px] items-center justify-center border border-[#ababab] bg-white"><Tri /></div>
      </div>
    </div>
  );
}

/* ---------- sheet tabs and status bar ---------- */

const SHEETS: [string, string][] = [
  ["2nd Period", "w-[127px]"],
  ["5th Period", "w-[123px]"],
  ["6th Period", "w-[123px]"],
  ["7th Period", "w-[123px]"],
  ["VL Math 6", "w-[121px]"],
  ["VL Pre AP", "w-[115px]"],
];

function SheetTabs() {
  return (
    <div className="flex h-[35px] border-t border-b border-[#a0a0a0] border-b-[#c6c6c6] bg-[#e6e6e6] text-[17.500px] text-[#444]">
      <div className="flex w-[118px] shrink-0 items-center gap-[25px] pl-[27px]"><Tri dir="left" c="#b4b4b4" /><Tri dir="right" c="#b4b4b4" /></div>
      {SHEETS.map(([t, w]) =>
        t === "6th Period" ? (
          <div key={t} className={`${w} -mt-px flex h-[31px] items-center justify-center border-b-[3px] border-[#217346] bg-white text-[17.500px] font-bold tracking-[-0.4px] whitespace-nowrap text-[#217346]`}>{t}</div>
        ) : (
          <div key={t} className={`${w} mt-[3px] flex h-[26px] items-center justify-center pb-[3px] whitespace-nowrap ${t === "5th Period" || t === "2nd Period" ? "border-l border-[#a0a0a0]" : "border-r border-[#a0a0a0]"}`}>{t}</div>
        )
      )}
      <svg className="mt-[5px] ml-[40px]" width="23" height="23" viewBox="0 0 23 23" fill="none" stroke="#777" strokeWidth="1.400">
        <circle cx="11.500" cy="11.500" r="10.500" /><path d="M11.500 6v11M6 11.500h11" strokeWidth="2" />
      </svg>
      <div className="ml-[1387px] flex flex-col justify-center gap-[3px]">
        <i className="h-[3px] w-[3px] bg-[#aaa]" /><i className="h-[3px] w-[3px] bg-[#aaa]" /><i className="h-[3px] w-[3px] bg-[#aaa]" />
      </div>
      <div className="mt-[3px] ml-auto flex h-[25px] w-[1490px] border border-[#ababab] bg-[#d9d9d9]">
        <div className="flex w-[24px] items-center justify-center border-r border-[#ababab] bg-white"><Tri dir="left" /></div>
        <div className="w-[1406px] border-r border-[#ababab] bg-white" />
        <div className="ml-auto flex w-[24px] items-center justify-center border-l border-[#ababab] bg-white"><Tri dir="right" /></div>
      </div>
      <div className="w-[30px]" />
    </div>
  );
}

function StatusBar() {
  return (
    <div className="flex h-[32px] items-center justify-end bg-[#f3f2f1] text-[15.500px] tracking-[-0.3px] text-[#444]">
      <svg width="22" height="20" viewBox="0 0 22 20" fill="none" stroke="#444" strokeWidth="1.600">
        <path d="M6 14H1V1h19v6" /><circle cx="15" cy="13" r="3.500" /><path d="M15 7v3M15 16v3M9 13h3M18 13h3M11 9l2 2M17 15l2 2M19 9l-2 2M13 15l-2 2" />
      </svg>
      <span className="ml-[4px] w-[137px] whitespace-nowrap">Display Settings</span>
      <div className="flex h-[32px] w-[60px] items-center justify-center bg-[#c8c6c4]">
        <svg width="20" height="19" viewBox="0 0 20 19" fill="none" stroke="#222" strokeWidth="1.700"><path d="M1 1h18v17H1zM7 1v17M13 1v17M1 7h18M1 12h18" /></svg>
      </div>
      <S w="w-[60px]"><svg width="21" height="19" viewBox="0 0 21 19" fill="none" stroke="#444" strokeWidth="1.600"><path d="M1 1h19v17H1zM5 4h11v11H5zM7 7h7M7 9.500h7M7 12h7" /></svg></S>
      <S w="w-[60px]"><svg width="21" height="19" viewBox="0 0 21 19" fill="none" stroke="#444" strokeWidth="1.600"><path d="M1 1h19v17H1zM7 1v10M13 1v10M1 11h12" /></svg></S>
      <span className="ml-[8px] h-[2px] w-[12px] bg-[#444]" />
      <div className="relative ml-[9px] h-[2px] w-[148px] bg-[#aaa]"><span className="absolute -top-[8px] left-[70px] h-[17px] w-[8px] bg-[#777]" /></div>
      <svg className="ml-[8px]" width="13" height="13" stroke="#444" strokeWidth="1.600"><path d="M0 6.500h13M6.500 0v13" /></svg>
      <span className="mr-[11px] ml-[19px] w-[39px]">100%</span>
    </div>
  );
}

/* ---------- taskbar ---------- */

function Edge({ badge }: { badge: string }) {
  return (
    <svg width="38" height="38" viewBox="0 0 38 38">
      <defs>
        <linearGradient id="eg" x1="0" y1="0" x2="1" y2="0.6"><stop offset="0" stopColor="#1a9fe0" /><stop offset=".5" stopColor="#2cc3d0" /><stop offset="1" stopColor="#5fdc4c" /></linearGradient>
        <linearGradient id="eb" x1="0" y1="0" x2="1" y2="1"><stop offset="0" stopColor="#1783d3" /><stop offset="1" stopColor="#114a8b" /></linearGradient>
      </defs>
      <circle cx="19" cy="19" r="18" fill="url(#eb)" />
      <path d="M1 17C3 6 11 1 19 1c11 0 18 8 18 15 0 6-5 9-10 9-4 0-6-1-5-3 3-4 0-9-5-10-6-1-12 2-16 5z" fill="url(#eg)" />
      <path d="M37 17c0 6-5 9-10 9-4 0-6-2-5-4-3 4 0 9 12 8l3-5z" fill="#33302d" />
      <path d="M17 20c-4 6 2 15 17 10-4 5-9 7-15 7C10 34 9 24 17 20z" fill="#175ea8" />
      {badge === "face" && (<g><circle cx="9" cy="28" r="9" fill="#6a3a22" /><ellipse cx="9" cy="27" rx="4.500" ry="6" fill="#d9a585" /><path d="M2 34q7-4 14 0-7 6-14 0z" fill="#b98a70" /></g>)}
      {badge === "seal" && (<g><circle cx="9" cy="28" r="9" fill="#f1e7ea" /><circle cx="9" cy="28" r="6.500" fill="#7c1838" /><path d="M9 23v10M6 28h6M6 32h6" stroke="#fff" strokeWidth="1.500" /></g>)}
      {badge === "pair" && (<g><circle cx="7" cy="29" r="8" fill="#3a2a24" /><circle cx="14" cy="27" r="6" fill="#4a3026" /><circle cx="6" cy="28" r="3.500" fill="#d3a88b" /><circle cx="14" cy="26" r="3" fill="#d9b296" /><path d="M1 35q6-4 10 0-5 3-10 0z" fill="#eee" /></g>)}
    </svg>
  );
}

function Office({ l, a, b, c, d }: { l: string; a: string; b: string; c: string; d: string }) {
  return (
    <svg width="36" height="34" viewBox="0 0 36 34">
      <path d="M9 1h26v11H9z" fill={a} /><path d="M9 11h26v11H9z" fill={b} /><path d="M9 22h26v11H9z" fill={c} />
      <rect x="0" y="8" width="19" height="19" rx="2" fill={d} />
      <text x="9.500" y="23" textAnchor="middle" fontSize="14" fontWeight="700" fill="#fff" fontFamily="Open Sans">{l}</text>
    </svg>
  );
}

function Adobe({ t, bg, fg }: { t: string; bg: string; fg: string }) {
  return <div className={`${bg} ${fg} flex h-[32px] w-[33px] items-center justify-center rounded-[6px] text-[18px] font-bold tracking-[-0.5px]`}>{t}</div>;
}

function Task({ children, on, extra, tile = "", bar = "bg-[#76b9ed]" }: Kids & { on?: boolean; extra?: boolean; tile?: string; bar?: string }) {
  return (
    <div className="relative flex h-[60px] w-[75px] shrink-0 items-center justify-center">
      {tile && <div className={`absolute inset-y-0 right-0 left-0 mx-[1px] ${tile}`} />}
      <div className="relative">{children}</div>
      {on && (
        <div className={`absolute bottom-0 flex h-[3px] ${tile ? "w-[73px]" : "w-[61px]"}`}>
          <span className={`flex-1 ${bar}`} />
          {extra && <span className="w-[13px] bg-[#5a86ab]" />}
        </div>
      )}
    </div>
  );
}

function Cloud({ a, b, c }: { a: string; b: string; c: string }) {
  return (
    <svg width="24" height="16" viewBox="0 0 24 16">
      <circle cx="13" cy="6" r="6" fill={a} /><circle cx="6" cy="10.500" r="5.500" fill={b} /><circle cx="19" cy="11" r="5" fill={c} />
      <path d="M6 16L14 8l6 8z" fill={c} /><path d="M5 16h15v-4H8z" fill={c} />
    </svg>
  );
}

function Taskbar() {
  return (
    <div className="flex h-[60px] items-center overflow-hidden bg-[linear-gradient(90deg,#3b352f_0%,#46403a_17%,#36322e_24%,#272422_30%,#2a2725_40%,#37312d_55%,#403a33_62%,#352b2a_65%,#473f37_73%,#3a302b_80%,#4a433c_87%,#3f3830_92%,#4a443c_100%)] text-white">
      <div className="flex w-[73px] items-center justify-center">
        <svg width="25" height="25" viewBox="0 0 25 25" fill="#fff"><path d="M0 3.500l11-1.500v10H0zM12 1.800L25 0v12H12zM0 13h11v10L0 21.500zM12 13h13v12l-13-1.800z" /></svg>
      </div>
      <div className="mt-[1px] flex h-[59px] w-[514px] items-center border-2 border-[#bdbdbd] bg-[#f2f2f2]">
        <svg className="ml-[16px]" width="25" height="25" viewBox="0 0 25 25" fill="none" stroke="#222" strokeWidth="2"><circle cx="15.500" cy="9" r="7.800" /><path d="M10 15l-9 9" /></svg>
        <span className="ml-[17px] text-[21.800px] tracking-[-0.2px] text-[#444]">Type here to search</span>
      </div>
      <Task><svg width="26" height="26"><circle cx="13" cy="13" r="10" fill="none" stroke="#fff" strokeWidth="3" /></svg></Task>
      <div className="-ml-[3px]"><Task>
        <svg width="25" height="24" viewBox="0 0 25 24" fill="none" stroke="#fff" strokeWidth="1.600"><path d="M1 0v4h15V0M1 7h15v10H1zM1 24v-4h15v4M23 0v5M23 11v13" /><path d="M21.500 7h3v3h-3z" fill="#fff" stroke="none" /></svg>
      </Task></div>
      <Task on extra><Edge badge="face" /></Task>
      <Task on><Edge badge="seal" /></Task>
      <Task><Edge badge="pair" /></Task>
      <Task on>
        <svg width="33" height="28" viewBox="0 0 33 28"><path d="M0 1h12l3 3v5H0z" fill="#d99a17" /><path d="M0 4h13l3-2h16v23H0z" fill="#fcd462" /><path d="M5 27V14h23v13h-6v-7H11v7z" fill="#4094d6" /></svg>
      </Task>
      <Task>
        <svg width="35" height="37" viewBox="0 0 35 37"><path d="M9 10V1h17v9" fill="none" stroke="#eee" strokeWidth="2.500" /><path d="M0 9h35v27H0z" fill="#f2f2f2" /><path d="M11 17h6v6h-6z" fill="#f25022" /><path d="M18.500 17h6v6h-6z" fill="#7fba00" /><path d="M11 24.500h6v6h-6z" fill="#00a4ef" /><path d="M18.500 24.500h6v6h-6z" fill="#ffb900" /></svg>
      </Task>
      <Task on><Office l="O" a="#28a8ea" b="#1787d8" c="#1470c0" d="#0f64b8" /></Task>
      <Task><Office l="W" a="#41a5ee" b="#2b7cd3" c="#144a9c" d="#185abd" /></Task>
      <Task on extra tile="bg-white/20"><Office l="X" a="#33c481" b="#21a366" c="#185c37" d="#107c41" /></Task>
      <Task><Office l="N" a="#ca64ea" b="#b65be0" c="#9332bf" d="#7719aa" /></Task>
      <Task>
        <svg width="36" height="34" viewBox="0 0 36 34"><circle cx="19" cy="6" r="5.500" fill="#7b83eb" /><circle cx="30" cy="8" r="4" fill="#5059c9" /><path d="M24 13h12v11q-2 6-8 5z" fill="#5059c9" /><path d="M10 13h18v12q-3 9-10 9-8-1-8-9z" fill="#7b83eb" /><rect y="9" width="18" height="18" rx="2" fill="#4b53bc" /><text x="9" y="23" textAnchor="middle" fontSize="14" fontWeight="700" fill="#fff" fontFamily="Open Sans">T</text></svg>
      </Task>
      <Task on>
        <div className="flex h-[32px] w-[33px] items-center justify-center rounded-[6px] bg-[conic-gradient(from_20deg,#f58a1e,#9fd84a,#2bb5e8,#5b5bd6,#a03bd0,#e0257a,#f2203a,#f58a1e)]">
          <svg width="24" height="22" viewBox="0 0 24 22" fill="none" stroke="#fff" strokeWidth="2.200"><path d="M12 12a4 4 0 0 0-6-4 5 5 0 0 0 0 9q3 1 8 0M10 11q1-5 6-5a5.500 5.500 0 0 1 0 11q-4 0-7-5" /><circle cx="12" cy="11" r="10" strokeWidth="1.200" /></svg>
        </div>
      </Task>
      <Task><svg width="24" height="30" viewBox="0 0 24 30"><path d="M0 0h17l7 6v24H0z" fill="#f5f5f7" /><path d="M17 0v6h7z" fill="#c8c8cc" /></svg></Task>
      <Task>
        <svg width="27" height="36" viewBox="0 0 27 36"><rect width="27" height="36" rx="2" fill="#66717c" /><path d="M3 3h21v6H3z" fill="#3cc4f5" />
          {[12, 19, 27].map((y) => [3, 11, 19].map((x) => <rect key={`${x}-${y}`} x={x} y={y} width="6" height="5.500" fill={x === 19 && y > 12 ? "#1c5a9c" : "#cdd3d8"} />))}
        </svg>
      </Task>
      <Task>
        <svg width="37" height="36" viewBox="0 0 37 36"><rect width="37" height="36" rx="3" fill="#5db6dc" /><path d="M0 31q18-5 37 0v5H0z" fill="#0a0a0a" /><circle cx="15" cy="6" r="4" fill="#050505" /><path d="M10 11q6-3 9 2l4 5 4-8 2 1-5 12-4-1-3-3 1 6 6 1 8 7h-8l-6-5-5 5H8q-2-14 2-22z" fill="#050505" /></svg>
      </Task>
      <Task on tile="bg-[#ad672d]" bar="bg-[#f7770f]">
        <svg width="36" height="36" viewBox="0 0 36 36"><circle cx="18" cy="18" r="18" fill="#1ed760" /><path d="M7 12q12-4 23 3M8 18.500q11-3 20 2.500M9 24.500q9-2.500 16.500 2" fill="none" stroke="#191414" strokeWidth="3.200" strokeLinecap="round" /></svg>
      </Task>
      <Task on><Adobe t="Ai" bg="bg-[#330000]" fg="text-[#ff9a00]" /></Task>
      <Task on extra>
        <div className="flex h-[32px] w-[33px] items-center justify-center rounded-[6px] bg-[#020b1e]">
          <svg width="24" height="22" viewBox="0 0 24 22" fill="none" stroke="#fff" strokeWidth="1.800"><path d="M11 1q3 0 1 7Q9 15 4 20q-3 2-3 0 1-4 12-6 9-1 10 2-2 3-9-4-4-5-4-9 0-2 1-2z" /></svg>
        </div>
      </Task>
      <Task on><Adobe t="Dw" bg="bg-[#470137]" fg="text-[#ff61f6]" /></Task>
      <Task on extra><svg width="33" height="32" viewBox="0 0 33 32"><path d="M0 0h33v16L18 32H0z" fill="#ffd60a" /><path d="M33 16H16v16z" fill="#4f4a42" /></svg></Task>
      <Task on><Office l="P" a="#2fc4c4" b="#1fa5a8" c="#0c7a80" d="#0a7c80" /></Task>

      <div className="ml-auto flex items-center">
        <svg width="18" height="12" viewBox="0 0 18 12" fill="none" stroke="#fff" strokeWidth="1.800"><path d="M1 11l8-9 8 9" /></svg>
        <div className="ml-[15px] flex gap-[12px]">
          <Cloud a="#0a63b5" b="#0f78d4" c="#28a8ea" /><Cloud a="#0a63b5" b="#0f78d4" c="#28a8ea" /><Cloud a="#9c9690" b="#c9c5c1" c="#fff" />
        </div>
        <svg className="ml-[12px]" width="24" height="19" viewBox="0 0 24 19" fill="none" stroke="#fff" strokeWidth="1.500"><path d="M6 2h17v12H4V8M1 1h5v5H1zM3 6v11M9 18h10M14 14v4" /></svg>
        <svg className="ml-[12px]" width="23" height="20" viewBox="0 0 23 20" fill="none" stroke="#fff" strokeWidth="1.500"><path d="M1 7h4l5-5v16l-5-5H1zM13 7q2 3 0 6M16 4q4 6 0 12M19 2q6 8 0 16" /></svg>
        <div className="ml-[10px] flex w-[94px] flex-col items-center text-[17.500px] leading-[28px] tracking-[-0.2px] whitespace-nowrap"><span>8:37 PM</span><span>11/14/2020</span></div>
        <svg className="ml-[25px]" width="26" height="25" viewBox="0 0 26 25" fill="none" stroke="#fff" strokeWidth="1.600"><path d="M1 1h24v18h-9v5l-5-5H1z" /></svg>
        <div className="mr-[6px] ml-[31px] h-[60px] w-px bg-[#8a857f]" />
      </div>
    </div>
  );
}

export default function App() {
  return (
    <div className="flex h-[2160px] w-[3840px] flex-col overflow-hidden bg-[#e6e6e6] font-['Open_Sans',sans-serif] leading-[24px] [&_svg]:overflow-visible">
      <TitleBar />
      <RibbonTabs />
      <Ribbon />
      <FormulaBar />
      <Sheet />
      <SheetTabs />
      <StatusBar />
      <Taskbar />
    </div>
  );
}
